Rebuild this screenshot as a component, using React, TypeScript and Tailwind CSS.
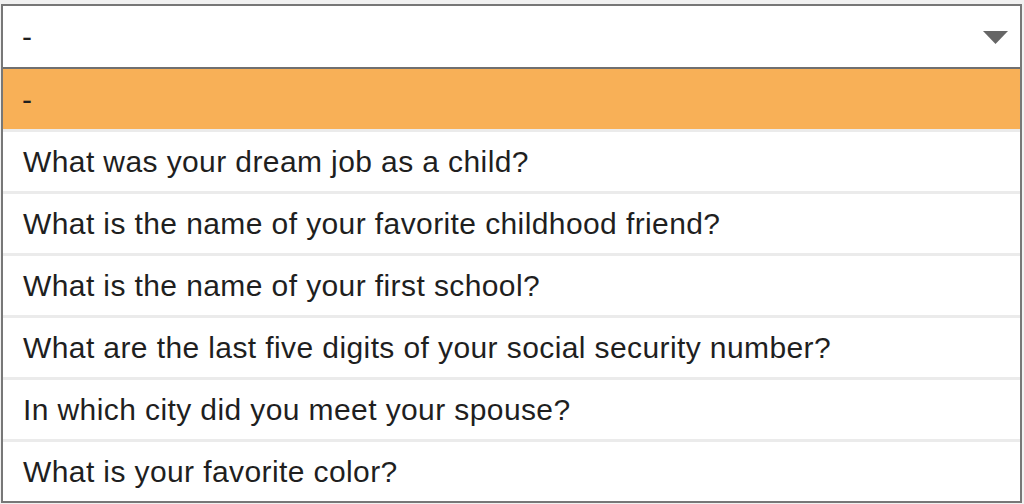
import React from 'react';

const questions = [
  'What was your dream job as a child?',
  'What is the name of your favorite childhood friend?',
  'What is the name of your first school?',
  'What are the last five digits of your social security number?',
  'In which city did you meet your spouse?',
  'What is your favorite color?',
];

export default function App() {
  return (
    <div className="w-[1024px] h-[504px] overflow-hidden bg-[#f1f1f1] pt-[4px] pl-[1px] text-[#1f1f1f] font-['Liberation_Sans',Arial,sans-serif]">
      <div className="w-[1021px] border-2 border-[#777] bg-white">
        {/* Select header */}
        <div className="h-[63px] flex items-center justify-between pl-[19px] pr-[12px] border-b-2 border-[#707070]">
          <span className="text-[30px]">-</span>
          <svg width="25" height="13" viewBox="0 0 25 13" className="mt-[2px]">
            <polygon points="0,0 25,0 12.5,13" fill="#666" />
          </svg>
        </div>

        {/* Options */}
        <ul>
          <li className="h-[60px] flex items-center pl-[19px] bg-[#f8b057] text-[30px]">-</li>
          {questions.map(q => (
            <li
              key={q}
              className="h-[62px] flex items-center pl-[20px] border-t-[3px] border-[#ebebeb] text-[30px] tracking-[0.4px]"
            >
              {q}
            </li>
          ))}
        </ul>
      </div>
    </div>
  );
}
